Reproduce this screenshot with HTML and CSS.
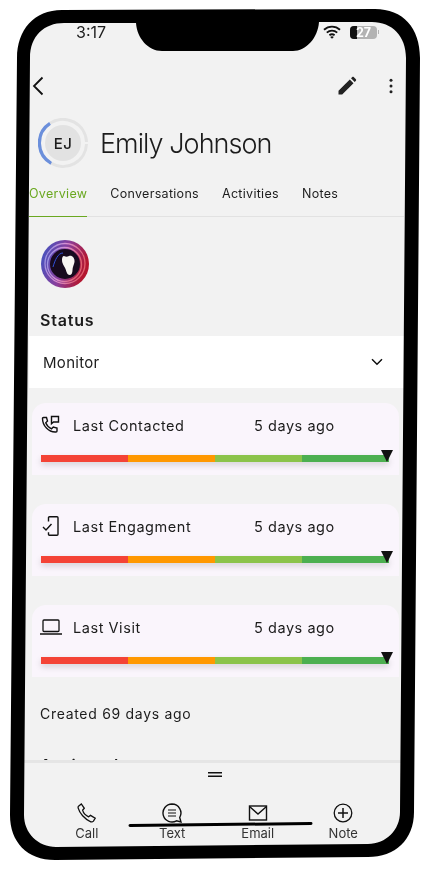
FILE: index.html
```html
<!DOCTYPE html>
<html>
<head>
    <title>Emily Johnson</title>
    <meta name="viewport" content="width=device-width, initial-scale=1">
    <meta charset="UTF-8">
    <link rel="stylesheet" href="styles.css">
</head>
<body>
    <div class="screen">
        <div class="main">
            <div class="status-bar">
                <span class="clock">3:17</span>
                <div class="status-icons">
                    <svg class="wifi" width="18" height="14" viewBox="0 0 18 14"><path d="M1 4.800C5.600.6 12.400.6 17 4.800M3.800 7.600c3-2.600 7.400-2.600 10.400 0M6.400 10.200c1.500-1.200 3.700-1.200 5.200 0" fill="none" stroke="#111" stroke-width="1.900"/><path d="M9 13.800 7.200 11.900c1-.8 2.600-.8 3.600 0z" fill="#111"/></svg>
                    <div class="battery"><span class="battery-fill"></span><span class="battery-num">27</span></div>
                    <span class="battery-tip"></span>
                </div>
            </div>

            <div class="toolbar">
                <svg class="back" width="14" height="20" viewBox="0 0 14 20"><path d="M11.500 1.500 3 10l8.500 8.500" fill="none" stroke="#111" stroke-width="1.800"/></svg>
                <div class="toolbar-right">
                    <svg width="20" height="20" viewBox="0 0 20 20"><path d="M1.500 18.500v-3.700L12.800 3.500l3.700 3.700L5.200 18.500zM14 2.300l1.300-1.200c.4-.4 1-.4 1.400 0l2.200 2.200c.4.4.4 1 0 1.400l-1.200 1.300z" fill="#222"/></svg>
                    <svg width="4" height="16" viewBox="0 0 4 16"><circle cx="2" cy="2.200" r="1.500" fill="#222"/><circle cx="2" cy="8" r="1.500" fill="#222"/><circle cx="2" cy="13.800" r="1.500" fill="#222"/></svg>
                </div>
            </div>

            <div class="profile">
                <div class="avatar">
                    <svg width="50" height="50" viewBox="0 0 50 50">
                        <path d="M12 5.300A23.500 23.500 0 0 1 48.500 24M48.500 26A23.500 23.500 0 0 1 13.200 45.300" fill="none" stroke="#e3e3e3" stroke-width="3"/>
                        <path d="M12 5.300A23.500 23.500 0 0 0 13.200 45.300" fill="none" stroke="#6b8fdb" stroke-width="3.200"/>
                        <circle cx="25" cy="25" r="18" fill="#e2e2e2"/>
                    </svg>
                    <span class="initials">EJ</span>
                </div>
                <h1 class="name">Emily Johnson</h1>
            </div>

            <div class="tabs">
                <span class="tab tab-active">Overview</span>
                <span class="tab">Conversations</span>
                <span class="tab">Activities</span>
                <span class="tab">Notes</span>
            </div>

            <svg class="logo" width="48" height="48" viewBox="0 0 48 48">
                <defs>
                    <linearGradient id="ringGrad" x1="0" y1="0" x2="1" y2="0.300">
                        <stop offset="0" stop-color="#3a55c4"/>
                        <stop offset="0.550" stop-color="#8a3f9c"/>
                        <stop offset="1" stop-color="#b3162f"/>
                    </linearGradient>
                    <linearGradient id="innerGrad" x1="0" y1="0" x2="1" y2="0.300">
                        <stop offset="0" stop-color="#8a93e6"/>
                        <stop offset="0.500" stop-color="#d88fd0"/>
                        <stop offset="1" stop-color="#e0606f"/>
                    </linearGradient>
                </defs>
                <circle cx="24" cy="24" r="24" fill="url(#ringGrad)"/>
                <circle cx="24" cy="23.500" r="20" fill="none" stroke="url(#innerGrad)" stroke-width="1.300"/>
                <circle cx="23.500" cy="24.500" r="17" fill="none" stroke="url(#innerGrad)" stroke-width="1.300"/>
                <circle cx="24" cy="24" r="15" fill="#170a1e"/>
                <path d="M12 27C14 20 17 13 22 13" fill="none" stroke="#3050d8" stroke-width="1"/>
                <path d="M23 16c2 1 3 1 5 0 3-1 6 2 5.500 6-.5 3-2 5-2 8 0 3-1 5-3 5-2 0-3-3-4-6-1-3-3.500-5-3.500-9 0-2 .5-4 2-4z" fill="#f7f5f2"/>
            </svg>

            <h2 class="section-title">Status</h2>

            <div class="select">
                <span>Monitor</span>
                <svg width="12" height="8" viewBox="0 0 12 8"><path d="M1 1.200 6 6.200l5-5" fill="none" stroke="#111" stroke-width="1.500"/></svg>
            </div>

            <div class="card card-first">
                <div class="card-row">
                    <svg width="20" height="20" viewBox="0 0 20 20" fill="none" stroke="#111" stroke-width="1.400"><path d="M1.500 3.500c0-.6.400-1 1-1h3l1 3.500-1.800 1.800c1 2.600 3 4.800 5.800 6l1.800-1.800 3.700 1v3c0 .6-.4 1-1 1C7.500 17.500 1.500 10.500 1.500 3.500z"/><path d="M10.500 1.500h7v5.500h-5l-2 1.800z"/></svg>
                    <span class="card-label">Last Contacted</span>
                    <span>5 days ago</span>
                </div>
                <div class="meter">
                    <span class="seg seg-red"></span><span class="seg seg-orange"></span><span class="seg seg-lime"></span><span class="seg seg-green"></span>
                    <span class="marker"></span>
                </div>
            </div>

            <div class="card">
                <div class="card-row">
                    <svg width="20" height="20" viewBox="0 0 20 20" fill="none" stroke="#111" stroke-width="1.400"><path d="M7.500 5.500V1.700c0-.6.400-1 1-1h7.500c.6 0 1 .4 1 1v16.600c0 .6-.4 1-1 1H8.500c-.6 0-1-.4-1-1v-2"/><path d="M2 11l3 3 5.500-6"/></svg>
                    <span class="card-label">Last Engagment</span>
                    <span>5 days ago</span>
                </div>
                <div class="meter">
                    <span class="seg seg-red"></span><span class="seg seg-orange"></span><span class="seg seg-lime"></span><span class="seg seg-green"></span>
                    <span class="marker"></span>
                </div>
            </div>

            <div class="card">
                <div class="card-row">
                    <svg class="laptop" width="22" height="16" viewBox="0 0 22 16" fill="none" stroke="#111" stroke-width="1.300"><rect x="3" y="1" width="16" height="11.500" rx="1"/><path d="M0 15h22"/></svg>
                    <span class="card-label">Last Visit</span>
                    <span>5 days ago</span>
                </div>
                <div class="meter">
                    <span class="seg seg-red"></span><span class="seg seg-orange"></span><span class="seg seg-lime"></span><span class="seg seg-green"></span>
                    <span class="marker"></span>
                </div>
            </div>

            <p class="created">Created 69 days ago</p>
            <h2 class="section-title assigned">Assigned to</h2>
        </div>

        <div class="sheet">
            <svg class="handle" width="14" height="5" viewBox="0 0 14 5"><path d="M0 .8h14M0 4.200h14" stroke="#111" stroke-width="1.500"/></svg>
            <div class="actions">
                <div class="action">
                    <svg width="20" height="20" viewBox="0 0 20 20" fill="none" stroke="#111" stroke-width="1.300"><path d="M1.500 3.200 4.300 1l3 4.300-1.700 1.900c.7 2.600 3 5.400 6 6.600l1.900-1.400 4.700 2.900-1.800 2.800c-.6.800-1.600 1-2.600.7C7.500 16 2.500 10 1.200 5.200c-.2-.8-.1-1.500.3-2z"/></svg>
                    <span>Call</span>
                </div>
                <div class="action">
                    <svg width="20" height="20" viewBox="0 0 20 20" fill="none" stroke="#111" stroke-width="1.400"><path d="M10 1a9 9 0 1 0 4.500 16.800l4.500 1.200-1.300-4.500A9 9 0 0 0 10 1z"/><path d="M6 7h8M6 10h8M6 13h8" stroke-width="1.100"/></svg>
                    <span>Text</span>
                </div>
                <div class="action">
                    <svg width="20" height="20" viewBox="0 0 20 20" fill="none" stroke="#111" stroke-width="1.400"><rect x="1.500" y="3" width="17" height="14"/><path d="M1.500 3.500 10 11l8.500-7.500"/></svg>
                    <span>Email</span>
                </div>
                <div class="action">
                    <svg width="20" height="20" viewBox="0 0 20 20" fill="none" stroke="#111" stroke-width="1.300"><circle cx="10" cy="10" r="8.800"/><path d="M10 5v10M5 10h10" stroke-width="1.500"/></svg>
                    <span>Note</span>
                </div>
            </div>
        </div>
    </div>

    <svg class="frame" width="431" height="873" viewBox="0 0 431 873">
        <path fill-rule="evenodd" fill="#000" d="M62 10 375 9C403 9 420 28 420 58L414 812C414 840 395 857 368 857L55 860C27 860 10 842 10 815L17 58C17 30 34 10 62 10Z
            M64 23C44 23 30 36 30 58L24 815C24 833 38 847 56 847L368 844C386 844 400 830 400 812L406 58C406 36 392 22 372 22L319 22C318 38 306 51 293 51L162 51C148 51 137 38 136 23Z"/>
        <path d="M130 825.500 311 823.500" stroke="#000" stroke-width="3" stroke-linecap="round"/>
    </svg>
</body>
</html>
```

FILE: styles.css
```css
html {
    font-family: Inter, "Liberation Sans", sans-serif;
    color: #1c1c1c;
}
body {
    margin: 0;
    height: 873px;
    background-color: #ffffff;
    overflow: hidden;
    filter: blur(0.35px);
}
.screen {
    width: 392px;
    height: 840px;
    margin: 0 0 0 20px;
    border-top: 10px solid #ffffff;
    background-color: #f2f2f2;
    border-radius: 44px;
    overflow: hidden;
}
.main {
    height: 750px;
    padding-left: 9px;
    width: 375px;
    overflow: hidden;
}
.status-bar {
    height: 44px;
    position: relative;
    display: flex;
    justify-content: space-between;
}
.clock {
    margin: 13px 0 0 47px;
    font-size: 16px;
    line-height: 18px;
}
.status-icons {
    display: flex;
    align-items: center;
    height: 14px;
    margin: 15px 25px 0 0;
}
.wifi {
    margin-right: 9px;
}
.battery {
    width: 27px;
    height: 13px;
    border-radius: 4px;
    background-color: #b3b3b3;
    position: relative;
    text-align: center;
}
.battery-fill {
    position: absolute;
    left: 0;
    top: 0;
    bottom: 0;
    width: 7px;
    border-radius: 4px 0 0 4px;
    background-color: #111;
}
.battery-num {
    position: relative;
    display: block;
    color: #fff;
    font-size: 12.5px;
    font-weight: 700;
    line-height: 13px;
}
.battery-tip {
    width: 1px;
    height: 4px;
    margin-left: 1px;
    background-color: #b3b3b3;
}
.toolbar {
    height: 40px;
    margin-top: 12px;
    display: flex;
    align-items: center;
    justify-content: space-between;
}
.back {
    margin-left: 2px;
}
.toolbar-right {
    display: flex;
    align-items: center;
    gap: 32px;
    margin-right: 11px;
}
.profile {
    height: 50px;
    margin-top: 12px;
    display: flex;
    align-items: center;
    padding-left: 9px;
}
.avatar {
    position: relative;
    width: 50px;
    height: 50px;
    margin-right: 12px;
}
.initials {
    position: absolute;
    inset: 0;
    display: flex;
    align-items: center;
    justify-content: center;
    font-size: 15px;
    font-weight: 500;
    letter-spacing: 0.5px;
}
.name {
    margin: 2px 0 0;
    font-size: 27px;
    font-weight: 300;
    line-height: 34px;
    letter-spacing: -0.95px;
}
.tabs {
    height: 44px;
    margin-top: 4px;
    display: flex;
    gap: 23px;
    border-bottom: 1px solid #e2e2e2;
}
.tab {
    font-size: 12.5px;
    line-height: 44px;
    letter-spacing: 0.3px;
}
.tab-active {
    color: #6aa820;
    box-shadow: 0 1px 0 #6aa820;
}
.logo {
    display: block;
    margin: 23px 0 0 12px;
}
.section-title {
    margin: 22px 0 0 11px;
    font-size: 16px;
    font-weight: 600;
    line-height: 20px;
    letter-spacing: 0.8px;
}
.select {
    height: 52px;
    margin-top: 6px;
    padding: 0 21px 0 14px;
    display: flex;
    align-items: center;
    justify-content: space-between;
    background-color: #ffffff;
    font-size: 15px;
    letter-spacing: 0.3px;
}
.card {
    width: 367px;
    height: 72px;
    box-sizing: border-box;
    margin: 29px 0 0 3px;
    padding: 12px 11px 0 9px;
    background-color: #faf5fc;
    border-radius: 14px 14px 0 0;
}
.card-first {
    margin-top: 15px;
}
.card-row {
    display: grid;
    grid-template-columns: 32px 181px 1fr;
    align-items: center;
    height: 20px;
    font-size: 14.5px;
    letter-spacing: 0.55px;
}
.laptop {
    margin-left: -1px;
}
.meter {
    position: relative;
    display: flex;
    height: 7px;
    width: 348px;
    margin-top: 20px;
    box-shadow: 0 3px 6px rgba(0,0,0,0.15);
}
.seg {
    flex: 1;
}
.seg-red { background-color: #f44336; }
.seg-orange { background-color: #ff9800; }
.seg-lime { background-color: #8bc34a; }
.seg-green { background-color: #4caf50; }
.marker {
    position: absolute;
    right: -4px;
    top: -5px;
    border-left: 6px solid transparent;
    border-right: 6px solid transparent;
    border-top: 12px solid #111;
}
.created {
    margin: 28px 0 0 11px;
    font-size: 14px;
    line-height: 18px;
    letter-spacing: 0.7px;
}
.assigned {
    margin-top: 32px;
}
.sheet {
    height: 90px;
    box-sizing: border-box;
    border-top: 3px solid #e5e5e5;
}
.handle {
    display: block;
    margin: 9px 0 0 188px;
}
.actions {
    display: grid;
    grid-template-columns: repeat(4, 85.5px);
    margin: 26px 0 0 24px;
}
.action {
    display: flex;
    flex-direction: column;
    align-items: center;
    gap: 2px;
    font-size: 13px;
    line-height: 16px;
    color: #333;
}
.frame {
    position: absolute;
    left: 0;
    top: 0;
    pointer-events: none;
}
```
